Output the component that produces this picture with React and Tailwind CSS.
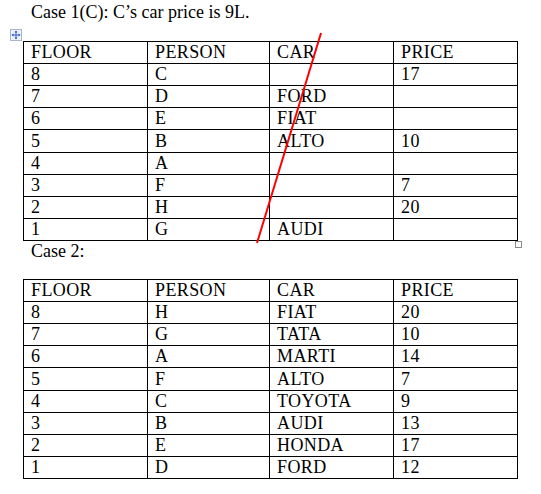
import React from "react";

const caseOne = [
  ["8", "C", "", "17"],
  ["7", "D", "FORD", ""],
  ["6", "E", "FIAT", ""],
  ["5", "B", "ALTO", "10"],
  ["4", "A", "", ""],
  ["3", "F", "", "7"],
  ["2", "H", "", "20"],
  ["1", "G", "AUDI", ""],
];

const caseTwo = [
  ["8", "H", "FIAT", "20"],
  ["7", "G", "TATA", "10"],
  ["6", "A", "MARTI", "14"],
  ["5", "F", "ALTO", "7"],
  ["4", "C", "TOYOTA", "9"],
  ["3", "B", "AUDI", "13"],
  ["2", "E", "HONDA", "17"],
  ["1", "D", "FORD", "12"],
];

const header = ["FLOOR", "PERSON", "CAR", "PRICE"];

function CarTable({ rows, tallRow }) {
  const all = [header, ...rows];
  return (
    <div className="grid grid-cols-[124px_122px_124px_124px] border-l border-t border-black w-fit">
      {all.map((row, r) =>
        row.map((cell, c) => (
          <div
            key={`${r}-${c}`}
            className={`border-r border-b border-black pl-[7px] tracking-[0.4px] ${
              r === tallRow ? "h-[23px] leading-[22px]" : "h-[22px] leading-[21px]"
            }`}
          >
            {cell}
          </div>
        ))
      )}
    </div>
  );
}

export default function App() {
  return (
    <div className="relative w-[541px] h-[494px] bg-white text-black text-[18px] leading-[21px] font-['Liberation_Serif',serif] overflow-hidden">
      <p className="pt-[2px] pl-[31px]">Case 1(C): C’s car price is 9L.</p>

      <div className="relative ml-[23px] mt-[18px] w-fit">
        {/* table move handle */}
        <svg
          className="absolute left-[-13px] top-[-12px]"
          width="12"
          height="12"
          viewBox="0 0 12 12"
        >
          <rect x="0.5" y="0.5" width="11" height="11" fill="#eef2f8" stroke="#a9b4c6" />
          <g stroke="#2f5fc4" strokeWidth="1" fill="none">
            <line x1="6" y1="2" x2="6" y2="10" />
            <line x1="2" y1="6" x2="10" y2="6" />
          </g>
          <g fill="#2f5fc4">
            <polygon points="6,1.5 4.5,3.5 7.5,3.5" />
            <polygon points="6,10.5 4.5,8.5 7.5,8.5" />
            <polygon points="1.5,6 3.5,4.5 3.5,7.5" />
            <polygon points="10.5,6 8.5,4.5 8.5,7.5" />
          </g>
        </svg>

        <CarTable rows={caseOne} tallRow={4} />

        {/* table resize handle */}
        <div className="absolute left-[492px] top-[200px] w-[7px] h-[7px] border border-[#8a8a8a] bg-white" />
      </div>

      <p className="pl-[31px]">Case 2:</p>

      <div className="ml-[23px] mt-[17px] w-fit">
        <CarTable rows={caseTwo} tallRow={4} />
      </div>

      <svg className="absolute left-0 top-0" width="541" height="494">
        <line x1="321" y1="33" x2="257" y2="243" stroke="#ff0000" strokeWidth="2" />
      </svg>
    </div>
  );
}
